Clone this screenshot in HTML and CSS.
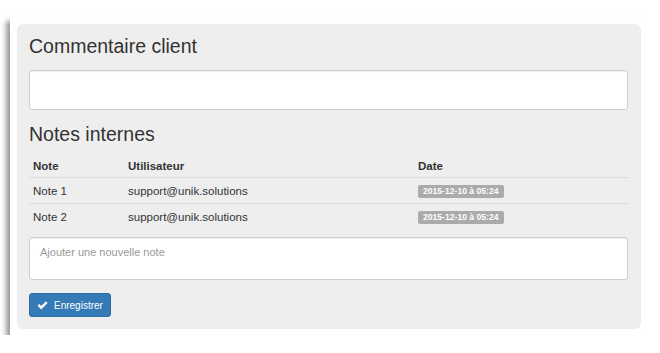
FILE: index.html
```html
<!DOCTYPE html>
<html lang="fr">
<head>
<meta charset="utf-8">
<title>Notes</title>
<link rel="stylesheet" href="styles.css">
</head>
<body>
<div class="frame">
  <div class="panel">
    <h3 class="title">Commentaire client</h3>
    <div class="input comment"></div>
    <h3 class="title notes-title">Notes internes</h3>
    <table class="notes">
      <thead>
        <tr><th class="c1">Note</th><th class="c2">Utilisateur</th><th class="c3">Date</th></tr>
      </thead>
      <tbody>
        <tr class="first"><td>Note 1</td><td>support@unik.solutions</td><td><span class="label">2015-12-10 à 05:24</span></td></tr>
        <tr><td>Note 2</td><td>support@unik.solutions</td><td><span class="label">2015-12-10 à 05:24</span></td></tr>
      </tbody>
    </table>
    <div class="input newnote"><span class="placeholder">Ajouter une nouvelle note</span></div>
    <div class="actions">
      <button class="btn">
        <svg class="check" width="11" height="9" viewBox="0 0 11 9"><path d="M0.5 4.8 L2.3 3.0 L4.2 4.9 L8.9 0.3 L10.6 2.0 L4.2 8.4 Z" fill="#fff"/></svg>
        <span>Enregistrer</span>
      </button>
    </div>
  </div>
</div>
</body>
</html>
```

FILE: styles.css
```css
html, body {
  margin: 0;
  padding: 0;
  background: #fff;
}
body {
  font-family: "Liberation Sans", Arial, sans-serif;
  color: #333;
}
.frame {
  margin: 17px 0 0 10px;
  width: 635px;
  height: 318px;
  box-sizing: border-box;
  padding: 7px 4px 6px 7px;
  background: #fff;
  box-shadow: -4px 4px 5px rgba(0, 0, 0, 0.4);
}
.panel {
  background: #eeeeee;
  border-radius: 6px;
  height: 305px;
  box-sizing: border-box;
  padding: 11px 13px 12px 12px;
  display: flex;
  flex-direction: column;
}
.title {
  margin: 0;
  font-size: 19.5px;
  line-height: 22px;
  font-weight: normal;
  color: #333;
}
.input {
  background: #fff;
  border: 1px solid #cfcfcf;
  border-radius: 3px;
  box-shadow: inset 0 1px 1px rgba(0, 0, 0, 0.075);
  box-sizing: border-box;
}
.comment {
  margin-top: 13px;
  height: 40px;
}
.notes-title {
  margin-top: 13px;
}
.notes {
  margin-top: 7px;
  width: 100%;
  border-collapse: separate;
  border-spacing: 0;
  font-size: 11.5px;
  table-layout: fixed;
}
.notes th, .notes td {
  padding: 5px 4px 3px;
  line-height: 17px;
  text-align: left;
  vertical-align: middle;
}
.notes th {
  padding: 6px 4px 2px;
  font-weight: bold;
  border-bottom: 1px solid #dcdcdc;
}
.notes tr.first td {
  border-bottom: 1px solid #dcdcdc;
}
.c1 { width: 87px; }
.c2 { width: 282px; }
.label {
  display: inline-block;
  background: #ababab;
  color: #fff;
  font-weight: bold;
  font-size: 8.6px;
  line-height: 13px;
  padding: 0 5px;
  border-radius: 2px;
  vertical-align: middle;
}
.newnote {
  margin-top: 8px;
  height: 43px;
  padding: 4px 10px;
}
.placeholder {
  font-size: 11px;
  line-height: 14px;
  color: #9a9a9a;
}
.actions {
  margin-top: 13px;
  display: flex;
}
.btn {
  display: flex;
  align-items: center;
  gap: 6px;
  height: 24px;
  width: 82px;
  box-sizing: border-box;
  padding: 0 0 0 7px;
  background: #337ab7;
  border: 1px solid #2e6da4;
  border-radius: 3px;
  color: #fff;
  font-family: "Liberation Sans", Arial, sans-serif;
  font-size: 10px;
  cursor: pointer;
}
.check {
  display: block;
}
```
